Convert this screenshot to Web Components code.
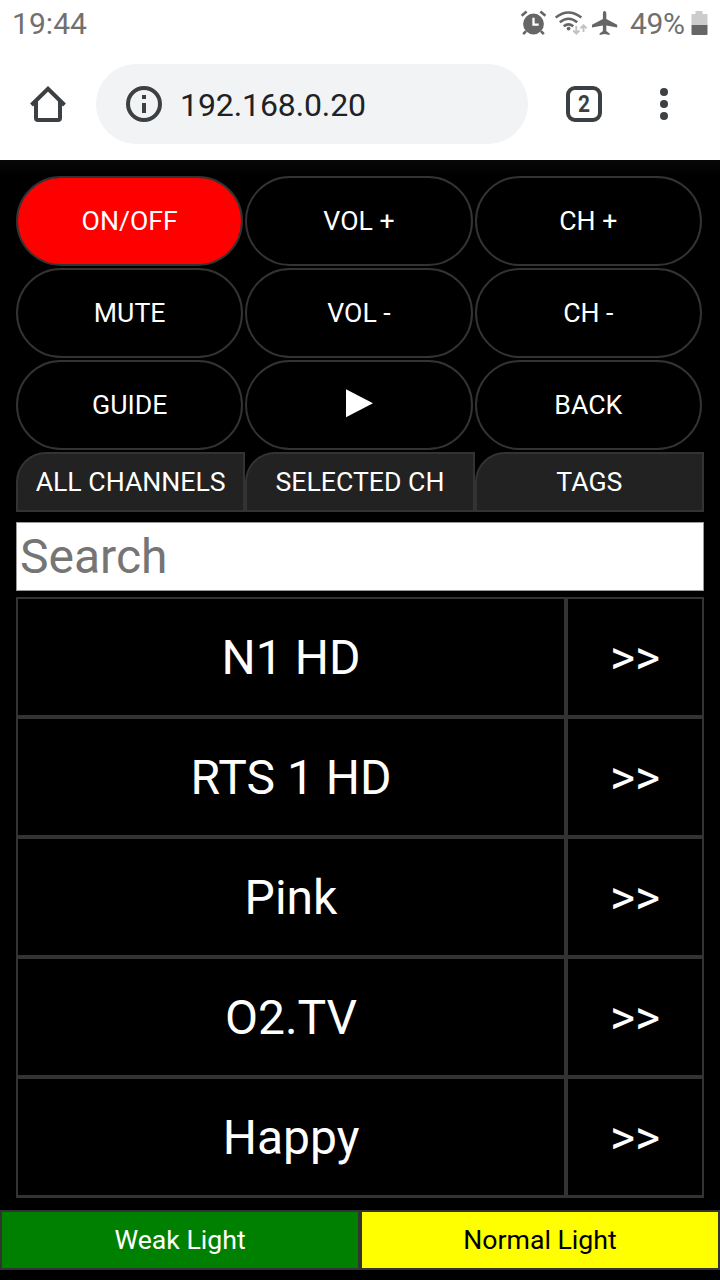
<!DOCTYPE html>
<html lang="en">
<head>
<meta charset="utf-8">
<meta name="viewport" content="width=device-width">
<title>TV remote</title>
<style>
html, body { margin: 0; background: #000; }
body { font-family: Roboto, "Liberation Sans", sans-serif; width: 720px; height: 1280px; overflow: hidden; }
</style>
</head>
<body>
<remote-app></remote-app>
<script>
const define = (name, html) => {
  const t = document.createElement('template');
  t.innerHTML = html;
  customElements.define(name, class extends HTMLElement {
    constructor() {
      super();
      this.attachShadow({ mode: 'open' }).appendChild(t.content.cloneNode(true));
    }
  });
};

define('status-bar', `
<style>
:host { display: flex; align-items: center; box-sizing: border-box; height: 48px; padding: 0 12px; background: #fff; color: #707070; font-size: 30px; line-height: 48px; }
.time { flex: 1; letter-spacing: .05px; }
svg { display: block; flex: none; }
.pct { width: 56px; margin-left: 10px; white-space: nowrap; letter-spacing: -.3px; }
.batt { margin-left: 5px; }
</style>
<span class="time">19:44</span>
<svg width="100" height="48" viewBox="520 0 100 48" fill="none" stroke="#666">
  <circle cx="533.5" cy="24" r="10.4" fill="#666" stroke="none"/>
  <path d="M521.6 15.8l5-4.2M545.4 15.8l-5-4.2M526 31.2l-2.8 3M541 31.2l2.8 3" stroke-width="2.6"/>
  <path d="M533.5 17.8v6.8h5.2" stroke="#fff" stroke-width="2.3"/>
  <path d="M555.7 17.6Q568.5 7.400 581.300 17.600M559.800 22.200Q568.500 15.200 577.200 22.200M563.700 26.200Q568.500 22.600 573.300 26.200" stroke-width="2.5"/>
  <circle cx="568.600" cy="28.600" r="1.900" fill="#666" stroke="none"/>
  <path d="M576.300 26v7.500M573.200 30.500l3.100 3.200 3.100-3.200M583.500 32v-6.700M580.400 28.400l3.100-3.100 3.100 3.100" stroke="#c2c2c2" stroke-width="1.900"/>
  <path d="M604.600 11c-1.100 0-1.700 1-1.700 2.300v5.800L592 24.800v2.600l10.900-2v5.500l-3.300 2.700v1.500l5-1.100 5 1.100v-1.500l-3.300-2.700v-5.500l10.900 2v-2.600l-10.900-5.700v-5.800c0-1.300-.6-2.300-1.700-2.300z" fill="#666" stroke="none"/>
</svg>
<span class="pct">49%</span>
<svg class="batt" width="17" height="48" viewBox="0 0 17 48"><path d="M4.500 11h7v3h5v11H.5V14h4z" fill="#ccc"/><path d="M.5 25h16v9a1 1 0 0 1-1 1h-14a1 1 0 0 1-1-1z" fill="#666"/></svg>
`);

define('address-bar', `
<style>
:host { display: flex; align-items: center; box-sizing: border-box; height: 112px; background: #fff; color: #202124; }
svg { display: block; flex: none; }
.pill { display: flex; align-items: center; width: 432px; height: 80px; border-radius: 40px; background: #f1f3f4; font-size: 32px; letter-spacing: -.1px; box-sizing: border-box; padding-left: 30px; gap: 18px; }
.pill span { transform: translateY(1px); }
.tabs { display: grid; place-items: center; box-sizing: border-box; width: 36px; height: 36px; border: 4px solid #3c4043; border-radius: 9px; margin-left: 38px; font-size: 24px; font-weight: 700; line-height: 28px; color: #3c4043; }
.tabs span { transform: scaleX(.87); }
.menu { margin-left: 50px; }
</style>
<svg width="96" height="80" viewBox="0 64 96 80" fill="none" stroke="#3c4043" stroke-width="4"><path d="M36 100v18q0 2 2 2h20q2 0 2-2v-18"/><path d="M31.500 105L48 88.800 64.500 105"/></svg>
<div class="pill"><svg width="36" height="36" viewBox="0 0 36 36"><circle cx="18" cy="18" r="16" fill="none" stroke="#3c4043" stroke-width="4"/><path d="M16 9h4v4h-4zM16 17h4v10h-4z" fill="#3c4043"/></svg><span>192.168.0.20</span></div>
<div class="tabs"><span>2</span></div>
<svg class="menu" width="24" height="36" viewBox="0 0 24 36" fill="#3c4043"><circle cx="12" cy="6" r="4"/><circle cx="12" cy="18" r="4"/><circle cx="12" cy="30" r="4"/></svg>
`);

define('remote-key', `
<style>
:host { display: flex; align-items: center; justify-content: center; box-sizing: border-box; height: 90px; margin-right: 2px; border: 2px solid #333; border-radius: 45px; color: #fff; font-size: 26.670px; }
:host([power]) { background: #f00; }
</style><slot></slot>`);

define('page-tab', `
<style>
:host { display: flex; align-items: center; justify-content: center; box-sizing: border-box; height: 60px; border: 2px solid #333; border-top-left-radius: 30px; background: #222; color: #fff; font-size: 26.670px; white-space: nowrap; }
</style><slot></slot>`);

define('search-box', `
<style>
:host { display: flex; align-items: center; box-sizing: border-box; height: 69px; margin: 10px 0 6px; padding: 0 3px; border: 1px solid #999; background: #fff; color: #757575; font-size: 48px; }
</style><slot></slot>`);

define('channel-row', `
<style>
:host { display: grid; grid-template-columns: 550px 138px; height: 120px; color: #fff; font-size: 48px; }
div { display: flex; align-items: center; justify-content: center; box-sizing: border-box; border: 2px solid #333; }
</style><div><slot></slot></div><div>&gt;&gt;</div>`);

define('light-button', `
<style>
:host { display: flex; align-items: center; justify-content: center; box-sizing: border-box; height: 60px; border: 2px solid #333; background: green; color: #fff; font-size: 26.670px; }
:host([normal]) { background: #ff0; color: #000; }
</style><slot></slot>`);

define('remote-app', `
<style>
:host { display: block; height: 1280px; background: #000; }
main { padding: 16px 16px 0; background: linear-gradient(#080808, #000 16px); }
.keys, .tabs { display: grid; grid-template-columns: repeat(3, 1fr); }
.keys { row-gap: 2px; margin-bottom: 2px; }
.list { border-bottom: 1px solid #333; }
footer { display: grid; grid-template-columns: 1fr 1fr; margin-top: 12px; }
.play { display: block; margin-left: 1px; }
</style>
<status-bar></status-bar>
<address-bar></address-bar>
<main>
  <div class="keys">
    <remote-key power>ON/OFF</remote-key><remote-key>VOL +</remote-key><remote-key>CH +</remote-key>
    <remote-key>MUTE</remote-key><remote-key>VOL -</remote-key><remote-key>CH -</remote-key>
    <remote-key>GUIDE</remote-key><remote-key><svg class="play" width="27" height="32" viewBox="0 0 27 32"><path d="M0 0.300L27 14.300 0 28.300z" fill="#fff"/></svg></remote-key><remote-key>BACK</remote-key>
  </div>
  <div class="tabs"><page-tab>ALL CHANNELS</page-tab><page-tab>SELECTED CH</page-tab><page-tab>TAGS</page-tab></div>
  <search-box>Search</search-box>
  <div class="list">
    <channel-row>N1 HD</channel-row><channel-row>RTS 1 HD</channel-row><channel-row>Pink</channel-row><channel-row>O2.TV</channel-row><channel-row>Happy</channel-row>
  </div>
</main>
<footer><light-button>Weak Light</light-button><light-button normal>Normal Light</light-button></footer>
`);
</script>
</body>
</html>
